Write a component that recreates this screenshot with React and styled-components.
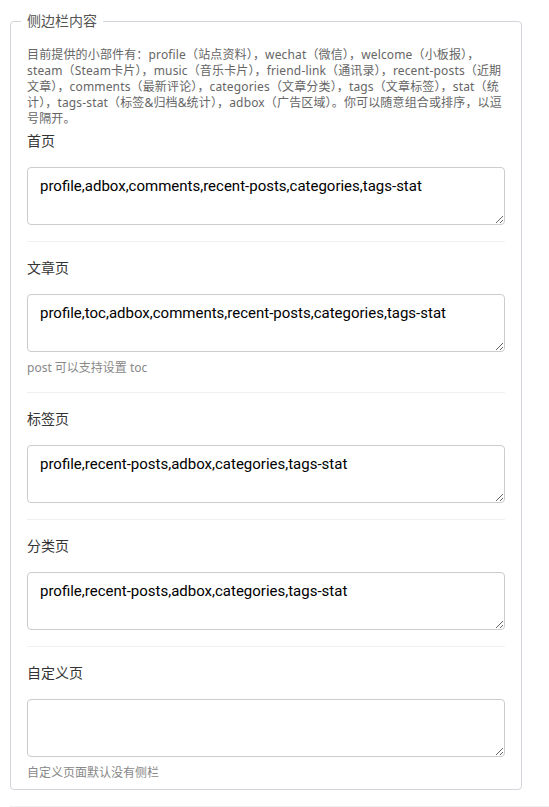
import React from 'react';
import styled, { createGlobalStyle } from 'styled-components';

const GlobalStyle = createGlobalStyle`
  body {
    margin: 0;
    background: #fff;
    font-family: "Noto Sans", "Noto Sans CJK SC", sans-serif;
  }
`;

const groups = [
  {
    label: '首页',
    value: 'profile,adbox,comments,recent-posts,categories,tags-stat',
  },
  {
    label: '文章页',
    value: 'profile,toc,adbox,comments,recent-posts,categories,tags-stat',
    help: 'post 可以支持设置 toc',
  },
  {
    label: '标签页',
    value: 'profile,recent-posts,adbox,categories,tags-stat',
  },
  {
    label: '分类页',
    value: 'profile,recent-posts,adbox,categories,tags-stat',
  },
  {
    label: '自定义页',
    value: '',
    help: '自定义页面默认没有侧栏',
  },
];

const App = () => {
  return (
    <Page>
      <GlobalStyle />
      <Fieldset>
        <Legend>侧边栏内容</Legend>
        <Description>
          目前提供的小部件有：profile（站点资料），wechat（微信），welcome（小板报），steam（Steam卡片），music（音乐卡片），friend-link（通讯录），recent-posts（近期文章），comments（最新评论），categories（文章分类），tags（文章标签），stat（统计），tags-stat（标签&amp;归档&amp;统计），adbox（广告区域）。你可以随意组合或排序，以逗号隔开。
        </Description>
        {groups.map((g, i) => (
          <Group key={g.label} first={i === 0} last={i === groups.length - 1}>
            <Label>{g.label}</Label>
            <TextArea defaultValue={g.value} />
            {g.help && <Help>{g.help}</Help>}
          </Group>
        ))}
      </Fieldset>
      <BottomRule />
    </Page>
  );
};

const Page = styled.div`
  padding: 11px 0 0 10px;
`;

const Fieldset = styled.fieldset`
  box-sizing: border-box;
  width: 512px;
  margin: 0;
  padding: 16px 16px 8px;
  border: 1px solid #d4d4dc;
  border-radius: 4px;
`;

const Legend = styled.legend`
  margin-left: -6px;
  padding: 0 6px;
  font-size: 14px;
  line-height: 20px;
  color: #555;
`;

const Description = styled.p`
  margin: 0 0 4px;
  font-size: 12px;
  line-height: 16px;
  letter-spacing: 0.15px;
  color: #666;
`;

const Group = styled.div`
  padding: ${(p) => (p.first ? '0' : '16px')} 0 ${(p) => (p.last ? '0' : '16px')};
  border-top: ${(p) => (p.first ? 'none' : '1px solid #f0f0f0')};
`;

const Label = styled.label`
  display: block;
  margin-bottom: 16px;
  font-size: 14px;
  line-height: 20px;
  color: #333;
`;

const TextArea = styled.textarea`
  display: block;
  box-sizing: border-box;
  width: 100%;
  height: 58px;
  margin: 0;
  padding: 6px 12px;
  border: 1px solid #ccc;
  border-radius: 4px;
  font-family: Roboto, "Noto Sans CJK SC", sans-serif;
  font-size: 15px;
  line-height: 24px;
  color: #000;
  resize: vertical;
  outline: none;
`;

const Help = styled.div`
  margin-top: 8px;
  font-size: 12px;
  line-height: 16px;
  color: #888;
`;

const BottomRule = styled.div`
  margin-top: 16px;
  border-top: 1px solid #f0f0f0;
`;

export default App;
